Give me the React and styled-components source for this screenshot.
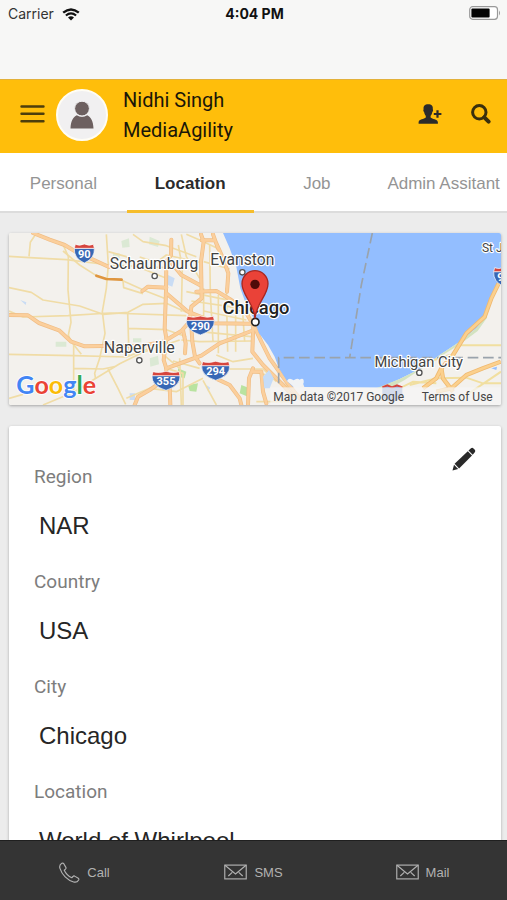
import React, { useState } from "react";
import styled, { createGlobalStyle, css } from "styled-components";

const GlobalStyle = createGlobalStyle`
  *, *::before, *::after { box-sizing: border-box; }
  body { margin: 0; background: #ececec; }
  button { font: inherit; color: inherit; border: 0; background: none; padding: 0; cursor: pointer; }
`;

const sans = `"Liberation Sans", Arial, sans-serif`;
const roboto = `Roboto, "Liberation Sans", sans-serif`;

const Screen = styled.div`
  display: flex;
  flex-direction: column;
  height: 100vh;
  overflow: hidden;
  background: #ececec;
  font-family: ${sans};
`;

const StatusBar = styled.div`
  flex: none;
  display: grid;
  grid-template-columns: 1fr auto 1fr;
  align-items: start;
  height: 79px;
  padding: 4px 6px 0 8px;
  background: #f7f7f6;
  color: #111;
  font-family: Inter, ${sans};
  font-size: 14px;
  line-height: 20px;
`;

const Carrier = styled.span`
  display: flex;
  align-items: center;
  gap: 8px;
  color: #333;
`;

const Clock = styled.time`
  font-weight: 700;
`;

const BatterySlot = styled.span`
  display: flex;
  justify-content: flex-end;
  padding-top: 2px;
`;

const Header = styled.header`
  flex: none;
  display: flex;
  align-items: center;
  height: 74px;
  padding: 0 16px 3px 20px;
  border-top: 1px solid #e3b13a;
  background: #ffbe0b;
`;

const IconButton = styled.button`
  display: flex;
  align-items: center;
  justify-content: center;
`;

const HeaderButton = styled(IconButton)`
  padding-bottom: 3px;
`;

const Avatar = styled.span`
  display: flex;
  align-items: center;
  justify-content: center;
  width: 52px;
  height: 52px;
  margin: 0 15px 0 11px;
  border: 2px solid #fffdf5;
  border-radius: 50%;
  background: #f1f0f1;
`;

const Identity = styled.div`
  flex: 1;
  color: #1a1608;
  font-family: ${roboto};
  font-size: 20px;
  line-height: 30px;
`;

const Name = styled.div``;

const HeaderActions = styled.div`
  display: flex;
  align-items: center;
  gap: 29px;
`;

const Tabs = styled.div`
  flex: none;
  display: grid;
  grid-template-columns: repeat(4, 1fr);
  height: 60px;
  background: #fff;
  border-bottom: 2px solid #dcdcdc;
`;

const Tab = styled.button`
  height: 60px;
  padding-top: 4px;
  white-space: nowrap;
  font-size: 17px;
  color: #949494;
  border-bottom: 3px solid transparent;
  ${(p) =>
    p.$active &&
    css`
      color: #2b2b2b;
      font-weight: 700;
      border-bottom-color: #f6bd2b;
    `}
`;

const Content = styled.main`
  flex: 1;
  min-height: 0;
  overflow-y: auto;
  scrollbar-width: none;
  padding: 20px 6px 20px 9px;
`;

const Card = styled.section`
  background: #fff;
  border-radius: 2px;
  box-shadow: 0 1px 3px rgba(0, 0, 0, 0.3);
`;

const MapCard = styled(Card)`
  margin-bottom: 21px;
  overflow: hidden;
`;

const MapDrawing = styled.svg`
  display: block;
  width: 100%;
  height: auto;
  font-family: ${roboto};
`;

const DetailsCard = styled(Card)`
  display: flex;
  align-items: flex-start;
  padding: 21px 25px 16px;
`;

const Fields = styled.dl`
  flex: 1;
  margin: 0;
  padding-top: 15px;
`;

const Field = styled.div`
  height: 105px;
`;

const FieldLabel = styled.dt`
  color: #7d7d7d;
  font-family: ${roboto};
  font-size: 19px;
  line-height: 30px;
`;

const FieldValue = styled.dd`
  margin: 0;
  padding: 19px 0 0 5px;
  color: #262626;
  font-size: 24px;
  line-height: 30px;
`;

const Footer = styled.nav`
  flex: none;
  display: grid;
  grid-template-columns: repeat(3, 1fr);
  height: 60px;
  padding-top: 3px;
  border-top: 1px solid #1f1f1f;
  background: #343434;
  color: #b2b2b2;
  font-size: 13px;
`;

const FooterAction = styled.button`
  display: flex;
  align-items: center;
  justify-content: center;
  gap: 7px;
`;

const WifiIcon = () => (
  <svg width="18" height="13" viewBox="0 0 18 13" fill="none" stroke="#111" aria-hidden="true">
    <path d="M1.2 4.6 Q9 -1.8 16.8 4.6" strokeWidth="2.4" />
    <path d="M3.9 7.5 Q9 3.2 14.1 7.5" strokeWidth="2.2" />
    <path d="M6 9.4 Q9 7 12 9.4 L9 12.5Z" fill="#111" stroke="none" />
  </svg>
);

const BatteryIcon = () => (
  <svg width="32" height="14" viewBox="0 0 32 14" aria-hidden="true">
    <rect x="0.7" y="0.7" width="27.8" height="12.6" rx="3" fill="#fff" stroke="#999" strokeWidth="1.2" />
    <rect x="2.4" y="2.4" width="18.2" height="9.2" rx="1" fill="#050505" />
    <path d="M30 4.5 Q32 7 30 9.5Z" fill="#999" />
  </svg>
);

const MenuIcon = () => (
  <svg width="25" height="20" viewBox="0 0 25 20" aria-hidden="true">
    <path d="M1.5 2.5H23.5M1.5 9.8H23.5M1.5 17.2H23.5" stroke="#4d3e0c" strokeWidth="2.4" strokeLinecap="round" />
  </svg>
);

const PersonIcon = () => (
  <svg width="24" height="28" viewBox="0 0 24 28" fill="#6d6060" aria-hidden="true">
    <path d="M0.5 27.5C0.7 20.5 3.2 15.6 6.8 14.3Q12 17.4 17.2 14.3C20.8 15.6 23.3 20.5 23.5 27.5Z" />
    <circle cx="12" cy="7.6" r="7.4" stroke="#f1f0f1" strokeWidth="1" />
  </svg>
);

const PersonAddIcon = () => (
  <svg width="24" height="20" viewBox="0 0 24 20" fill="#2b2b2b" aria-hidden="true">
    <path d="M10.2 0.3C6.8 0.3 5.2 2.2 5.6 5.2C5 5.8 5.4 7.6 6.1 8C6.4 10 7.1 11 7.8 11.8V13.6C6.2 15.4 1 15.2 0.6 18.2V19.7H19.9V18.2C19.4 15.2 14.2 15.4 12.6 13.6V11.8C13.4 11 14 10 14.3 8C15 7.6 15.4 5.8 14.8 5.2C15.2 2.2 13.6 0.3 10.2 0.3Z" />
    <path d="M18.4 6.2H20.6V8.9H23.4V11.1H20.6V13.8H18.4V11.1H15.8V8.9H18.4Z" />
  </svg>
);

const SearchIcon = () => (
  <svg width="20" height="20" viewBox="0 0 20 20" fill="none" stroke="#3a300d" aria-hidden="true">
    <circle cx="8.3" cy="8.3" r="6.7" strokeWidth="3" />
    <path d="M13.3 13.3L17.6 17.6" strokeWidth="4" strokeLinecap="round" />
  </svg>
);

const PencilIcon = () => (
  <svg width="24" height="24" viewBox="0 0 24 24" fill="#292929" aria-hidden="true">
    <path d="M0.5 23.5L2 17.8L6.2 22Z" />
    <path d="M2.6 16.8L15.8 4.2L20 8.5L7.1 21.4Z" />
    <path d="M16.5 3.5L19 1.2Q20.3 0.3 21.5 1.4L22.8 2.8Q23.9 4 22.8 5.3L20.7 7.8Z" />
  </svg>
);

const PhoneIcon = () => (
  <svg width="21" height="21" viewBox="0 0 22 22" fill="none" stroke="#b2b2b2" strokeWidth="1.2" strokeLinejoin="round" aria-hidden="true">
    <path d="M3 1.4C1 2.6 0.3 4.6 1 6.7C3 13.2 8.8 19 15.3 20.9C17.4 21.5 19.4 20.8 20.6 18.8C21 18 20.8 17.5 20.2 17L16.4 14.8C15.6 14.4 15.1 14.6 14.6 15.2L13.4 16.5C10.2 15.1 7 11.9 5.5 8.6L6.8 7.4C7.4 6.8 7.6 6.4 7.2 5.6L5 1.8C4.4 1 3.8 0.9 3 1.4Z" />
  </svg>
);

const EnvelopeIcon = () => (
  <svg width="23" height="16" viewBox="0 0 24 16" fill="none" stroke="#b2b2b2" strokeWidth="1.2" aria-hidden="true">
    <rect x="0.8" y="0.8" width="22.4" height="14.4" />
    <path d="M1 1L12 10L23 1M4.5 12.2L8.6 8.4M19.5 12.2L15.4 8.4" />
  </svg>
);

const minorRoads = [
  "M28 94L90 98L200 104L330 120L500 128",
  "M88 94L92 52L108 28",
  "M28 188L95 202L130 225L240 243L310 268L385 262L430 238L500 235L560 262",
  "M28 258L70 276L205 272L330 264L560 272",
  "M188 54L206 95L205 195L214 292L206 330L215 350L245 388",
  "M190 78L240 120L290 152M366 166L438 198L500 222",
  "M320 28L326 120L320 190L308 260L316 325L300 400L285 445L288 462",
  "M28 388L222 392L380 396L500 350",
  "M222 352V520M222 430L310 432L345 425",
  "M130 540L225 500L285 462L360 416L430 382L540 345",
  "M325 432L355 490L378 538M28 520L70 508",
  "M384 262L388 390M384 310L500 314L560 335",
  "M326 80L380 95L425 130L500 160M400 28L430 50L500 62L590 95",
  "M370 166L372 188L430 206M420 96L470 112L500 90L600 112",
  "M545 28L560 95L600 160M536 60L548 130L545 260M630 60L632 205L640 350",
  "M612 110L690 132M560 200L720 232M575 228L690 245L750 270M612 258L740 285M600 320L755 335",
  "M656 210V385M680 190L684 380M708 235V380M728 248L735 350M612 190V280",
  "M545 345L600 350L755 348M520 408L600 430M690 432H790L830 470",
  "M380 520L450 490L530 500L610 460M540 400L545 540M610 466L650 540M560 28L600 45L650 68",
  "M500 430L550 445L550 540M650 390L700 410L760 400M480 380L540 430",
  "M760 440L820 455L870 490M770 530H870",
];

const highways = [
  "M100 24L150 44L195 60L235 84L285 106L328 126",
  "M28 270L85 271L118 294L178 316L215 350L255 364L310 363L430 362L490 350",
  "M515 44L514 90L500 110L499 200L495 310L500 340L492 405L500 430",
  "M428 198L445 185L500 188M500 205L535 235L565 260L615 280L640 295L755 296",
  "M405 540L415 515L450 495L500 460L500 430L560 408L605 392L660 355L755 318",
  "M500 345L545 318L570 290L575 245L606 220L604 110L612 50L604 28",
  "M550 315L558 355L556 385M575 300L578 350L586 395L600 415",
  "M512 110L545 150L600 180M590 200L650 198L690 222L732 250L752 285",
  "M606 46H646L670 100L686 145L682 200M640 28L655 70",
  "M648 460L690 480L720 520L725 540M745 540L748 460L760 430",
  "M761 300L758 380L790 420L850 480L880 515M764 305L785 350L810 400L860 470L900 520",
  "M510 480L512 540M760 440L785 440L790 500L800 535",
];

const coastHighways = [
  "M1497 175L1475 220L1455 275L1400 325L1360 390L1325 430L1310 460L1270 490",
  "M1503 410L1450 430L1400 450L1355 490L1310 500M1325 430L1330 460L1360 500",
];

const shields = [
  { x: 254, y: 84, label: "90", width: 60 },
  { x: 602, y: 300, label: "290", width: 84 },
  { x: 648, y: 436, label: "294", width: 84 },
  { x: 499, y: 466, label: "355", width: 84 },
  { x: 1512, y: 154, label: "94", width: 60 },
];

const towns = [
  { x: 463, y: 132, label: "Schaumburg", size: 47, dot: [465, 153] },
  { x: 728, y: 120, label: "Evanston", size: 47, dot: [728, 142] },
  { x: 419, y: 384, label: "Naperville", size: 48, dot: [419, 406] },
  { x: 1257, y: 427, label: "Michigan City", size: 44, dot: [1259, 443] },
];

function Shield({ x, y, label, width }) {
  const w = width / 2;
  return (
    <g transform={`translate(${x} ${y})`}>
      <path d={`M${-w} -14Q${-w - 2} 16 0 30Q${w + 2} 16 ${w} -14Z`} fill="#3767b5" stroke="#fff" strokeWidth="2" />
      <path d={`M${-w} -14L${3 - w} -26Q${-w / 2} -20 0 -27Q${w / 2} -20 ${w - 3} -26L${w} -14Z`} fill="#d6453d" stroke="#fff" strokeWidth="2" />
      <text y="15" textAnchor="middle" fontSize="33" fontWeight="700" fill="#fff">{label}</text>
    </g>
  );
}

function ChicagoMap() {
  const halo = { stroke: "#fff", strokeWidth: 7, strokeLinejoin: "round", paintOrder: "stroke" };
  return (
    <MapDrawing viewBox="28 24 1476 516" role="img" aria-label="Map of Chicago">
      <rect x="28" y="24" width="1476" height="516" fill="#f3f1ed" />
      <path d="M168 350H200V365H168ZM365 48L388 40L390 66L368 68ZM450 35L480 48L475 66L448 58ZM400 340H425V352H400ZM450 400L475 392L478 418L452 425ZM340 85H360V100H340Z" fill="#dbe9d4" />
      <path d="M535 430L560 440L555 460L535 455ZM565 480L595 475L590 500L570 498ZM725 480L750 490L745 515L720 505Z" fill="#b9e3a0" />
      <path d="M505 150L525 160L518 185L505 180ZM390 505H406V525H390ZM620 480L632 488L625 500ZM62 225L80 232L78 240ZM360 120L372 125L368 133Z" fill="#c9dcf4" />
      <g fill="none" stroke="#f0dca6" strokeWidth="5" strokeLinejoin="round">
        {minorRoads.map((d) => <path key={d} d={d} />)}
      </g>
      <g fill="none" strokeLinejoin="round" strokeLinecap="round">
        {highways.map((d) => <path key={d} d={d} stroke="#f0bd85" strokeWidth="12" />)}
        {highways.map((d) => <path key={d} d={d} stroke="#fbcf9c" strokeWidth="8" />)}
        <path d="M290 152L320 162L366 164" stroke="#df963f" strokeWidth="8" />
      </g>
      <path d="M670 24L690 70L710 125L722 190L742 245L762 280L778 325L805 360L825 395L838 430L862 468L880 486L905 462L914 486L1140 488L1200 462L1265 430L1320 390L1380 350L1430 310L1460 275L1478 225L1504 150V24Z" fill="#93beff" />
      <path d="M1130 490L1200 462L1265 430L1320 390L1380 350L1430 310L1460 270L1462 278L1434 318L1378 360L1300 408L1215 465L1170 490Z" fill="#d3e3c0" />
      <path d="M790 455L808 435L822 460L810 490H794Z" fill="#c5dcf8" />
      <path d="M862 468Q868 455 882 466Q892 458 900 464Q914 456 912 474Q904 490 885 488Z" fill="#f1f3f5" />
      <path d="M1475 430L1492 425L1490 435Z" fill="#93beff" />
      <path d="M1380 361H1504M1230 480L1310 460L1400 458L1450 475H1504M1400 510L1460 470L1504 440M1290 410L1350 390M1180 500L1240 470L1310 475" fill="none" stroke="#f1dfa0" strokeWidth="6" />
      <g fill="none" strokeLinejoin="round">
        {coastHighways.map((d) => <path key={d} d={d} stroke="#efb970" strokeWidth="13" />)}
        {coastHighways.map((d) => <path key={d} d={d} stroke="#fbd08d" strokeWidth="8" />)}
      </g>
      <path d="M1118 24L1085 180L1050 398M837 475V398H1504" fill="none" stroke="#9aa3ac" strokeWidth="5" strokeDasharray="32 14" />

      {shields.map((s) => <Shield key={s.label} {...s} />)}
      <path d="M1148 487L1163 481L1177 487L1192 481L1208 487V518L1178 533L1148 518Z" fill="#7d9bd0" />
      <path d="M1148 487L1163 481L1177 487L1192 481L1208 487" fill="none" stroke="#d6453d" strokeWidth="6" />

      <g fill="#424242" textAnchor="middle">
        {towns.map((t) => (
          <g key={t.label}>
            <circle cx={t.dot[0]} cy={t.dot[1]} r="8" fill="#fff" stroke="#555" strokeWidth="4" />
            <text x={t.x} y={t.y} fontSize={t.size} {...halo}>{t.label}</text>
          </g>
        ))}
        <text x="769" y="266" fontSize="55" fontWeight="500" fill="#222" {...halo}>Chicago</text>
        <text x="1447" y="80" fontSize="36" textAnchor="start" {...halo}>St J</text>
      </g>

      <rect x="812" y="487" width="692" height="53" fill="#f5f5f5" fillOpacity="0.72" />
      <g fill="#454545" fontSize="36">
        <text x="821" y="527">Map data ©2017 Google</text>
        <text x="1266" y="527">Terms of Use</text>
      </g>

      <circle cx="767" cy="291" r="11" fill="#fff" stroke="#222" strokeWidth="5" />
      <path d="M766 280C763 235 727 210 727 176A39 39 0 0 1 805 176C805 210 770 235 766 280Z" fill="#ea4238" stroke="#a92720" strokeWidth="4" />
      <circle cx="766" cy="178" r="14" fill="#4f0b09" />

      <text x="50" y="508" fontFamily="Lato, sans-serif" fontSize="75" fontWeight="700" stroke="#fff" strokeWidth="5" paintOrder="stroke">
        <tspan fill="#4285f4">G</tspan><tspan fill="#ea4335">o</tspan><tspan fill="#fbbc05">o</tspan><tspan fill="#4285f4">g</tspan><tspan fill="#34a853">l</tspan><tspan fill="#ea4335">e</tspan>
      </text>
    </MapDrawing>
  );
}

const tabNames = ["Personal", "Location", "Job", "Admin Assitant"];

const fields = [
  ["Region", "NAR"],
  ["Country", "USA"],
  ["City", "Chicago"],
  ["Location", "World of Whirlpool"],
];

const contactActions = [
  ["Call", PhoneIcon],
  ["SMS", EnvelopeIcon],
  ["Mail", EnvelopeIcon],
];

export default function App() {
  const [active, setActive] = useState("Location");
  return (
    <Screen>
      <GlobalStyle />
      <StatusBar>
        <Carrier>Carrier <WifiIcon /></Carrier>
        <Clock>4:04 PM</Clock>
        <BatterySlot><BatteryIcon /></BatterySlot>
      </StatusBar>
      <Header>
        <HeaderButton aria-label="Menu"><MenuIcon /></HeaderButton>
        <Avatar><PersonIcon /></Avatar>
        <Identity>
          <Name>Nidhi Singh</Name>
          <Name>MediaAgility</Name>
        </Identity>
        <HeaderActions>
          <HeaderButton aria-label="Add person"><PersonAddIcon /></HeaderButton>
          <HeaderButton aria-label="Search"><SearchIcon /></HeaderButton>
        </HeaderActions>
      </Header>
      <Tabs role="tablist">
        {tabNames.map((name) => (
          <Tab key={name} role="tab" aria-selected={name === active} $active={name === active} onClick={() => setActive(name)}>
            {name}
          </Tab>
        ))}
      </Tabs>
      <Content>
        <MapCard><ChicagoMap /></MapCard>
        <DetailsCard>
          <Fields>
            {fields.map(([label, value]) => (
              <Field key={label}>
                <FieldLabel>{label}</FieldLabel>
                <FieldValue>{value}</FieldValue>
              </Field>
            ))}
          </Fields>
          <IconButton aria-label="Edit"><PencilIcon /></IconButton>
        </DetailsCard>
      </Content>
      <Footer>
        {contactActions.map(([label, Icon]) => (
          <FooterAction key={label}><Icon />{label}</FooterAction>
        ))}
      </Footer>
    </Screen>
  );
}
